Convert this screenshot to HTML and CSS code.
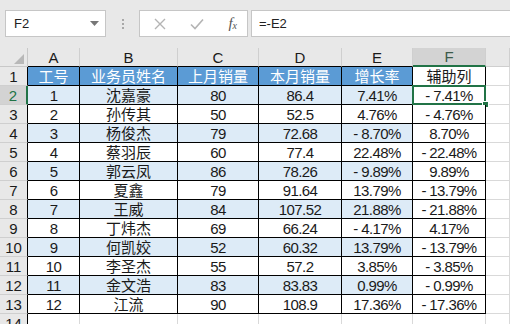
FILE: index.html
```html
<!DOCTYPE html>
<html>
    <head>
        <title>辅助列</title>
        <link rel="stylesheet" href="styles.css">
    </head>
    <body>
        <div class="formula-bar">
            <div class="name-box">
                <span>F2</span>
                <svg class="drop" width="9" height="5" viewBox="0 0 9 5"><path d="M0 0h9L4.5 5z" fill="#777"/></svg>
            </div>
            <div class="grip">
                <i></i><i></i><i></i>
            </div>
            <div class="fx-box">
                <svg width="12" height="12" viewBox="0 0 12 12"><path d="M1 1l10 10M11 1L1 11" stroke="#b4b4b4" stroke-width="1.4" fill="none"/></svg>
                <svg width="14" height="12" viewBox="0 0 14 12"><path d="M1 6.5l4 4L13 1.5" stroke="#b4b4b4" stroke-width="1.6" fill="none"/></svg>
                <span class="fx">f<sub>x</sub></span>
            </div>
            <div class="formula-input">=-E2</div>
        </div>

        <table class="sheet">
            <colgroup>
                <col style="width: 28px">
                <col style="width: 52px">
                <col style="width: 98px">
                <col style="width: 81px">
                <col style="width: 83px">
                <col style="width: 71px">
                <col style="width: 73px">
                <col style="width: 24px">
            </colgroup>
            <tr class="col-heads">
                <td class="corner"><span class="tri"></span></td>
                <td class="ch">A</td>
                <td class="ch">B</td>
                <td class="ch">C</td>
                <td class="ch">D</td>
                <td class="ch">E</td>
                <td class="ch active">F</td>
                <td class="ch blank"></td>
            </tr>
            <tr>
                <td class="rh">1</td>
                <td class="c hd zh">工号</td>
                <td class="c hd zh">业务员姓名</td>
                <td class="c hd zh">上月销量</td>
                <td class="c hd zh">本月销量</td>
                <td class="c hd zh">增长率</td>
                <td class="c zh">辅助列</td>
                <td class="g"></td>
            </tr>
            <tr class="alt">
                <td class="rh active">2</td>
                <td class="c">1</td>
                <td class="c zh">沈嘉豪</td>
                <td class="c">80</td>
                <td class="c">86.4</td>
                <td class="c">7.41%</td>
                <td class="c aux"><div class="sel"><span class="handle"></span></div>- 7.41%</td>
                <td class="g"></td>
            </tr>
            <tr>
                <td class="rh">3</td>
                <td class="c">2</td>
                <td class="c zh">孙传其</td>
                <td class="c">50</td>
                <td class="c">52.5</td>
                <td class="c">4.76%</td>
                <td class="c aux">- 4.76%</td>
                <td class="g"></td>
            </tr>
            <tr class="alt">
                <td class="rh">4</td>
                <td class="c">3</td>
                <td class="c zh">杨俊杰</td>
                <td class="c">79</td>
                <td class="c">72.68</td>
                <td class="c">- 8.70%</td>
                <td class="c aux">8.70%</td>
                <td class="g"></td>
            </tr>
            <tr>
                <td class="rh">5</td>
                <td class="c">4</td>
                <td class="c zh">蔡羽辰</td>
                <td class="c">60</td>
                <td class="c">77.4</td>
                <td class="c">22.48%</td>
                <td class="c aux">- 22.48%</td>
                <td class="g"></td>
            </tr>
            <tr class="alt">
                <td class="rh">6</td>
                <td class="c">5</td>
                <td class="c zh">郭云凤</td>
                <td class="c">86</td>
                <td class="c">78.26</td>
                <td class="c">- 9.89%</td>
                <td class="c aux">9.89%</td>
                <td class="g"></td>
            </tr>
            <tr>
                <td class="rh">7</td>
                <td class="c">6</td>
                <td class="c zh">夏鑫</td>
                <td class="c">79</td>
                <td class="c">91.64</td>
                <td class="c">13.79%</td>
                <td class="c aux">- 13.79%</td>
                <td class="g"></td>
            </tr>
            <tr class="alt">
                <td class="rh">8</td>
                <td class="c">7</td>
                <td class="c zh">王威</td>
                <td class="c">84</td>
                <td class="c">107.52</td>
                <td class="c">21.88%</td>
                <td class="c aux">- 21.88%</td>
                <td class="g"></td>
            </tr>
            <tr>
                <td class="rh">9</td>
                <td class="c">8</td>
                <td class="c zh">丁炜杰</td>
                <td class="c">69</td>
                <td class="c">66.24</td>
                <td class="c">- 4.17%</td>
                <td class="c aux">4.17%</td>
                <td class="g"></td>
            </tr>
            <tr class="alt">
                <td class="rh">10</td>
                <td class="c">9</td>
                <td class="c zh">何凯姣</td>
                <td class="c">52</td>
                <td class="c">60.32</td>
                <td class="c">13.79%</td>
                <td class="c aux">- 13.79%</td>
                <td class="g"></td>
            </tr>
            <tr>
                <td class="rh">11</td>
                <td class="c">10</td>
                <td class="c zh">李圣杰</td>
                <td class="c">55</td>
                <td class="c">57.2</td>
                <td class="c">3.85%</td>
                <td class="c aux">- 3.85%</td>
                <td class="g"></td>
            </tr>
            <tr class="alt">
                <td class="rh">12</td>
                <td class="c">11</td>
                <td class="c zh">金文浩</td>
                <td class="c">83</td>
                <td class="c">83.83</td>
                <td class="c">0.99%</td>
                <td class="c aux">- 0.99%</td>
                <td class="g"></td>
            </tr>
            <tr>
                <td class="rh">13</td>
                <td class="c">12</td>
                <td class="c zh">江流</td>
                <td class="c">90</td>
                <td class="c">108.9</td>
                <td class="c">17.36%</td>
                <td class="c aux">- 17.36%</td>
                <td class="g"></td>
            </tr>
            <tr>
                <td class="rh">14</td>
                <td class="g"></td>
                <td class="g"></td>
                <td class="g"></td>
                <td class="g"></td>
                <td class="g"></td>
                <td class="g"></td>
                <td class="g"></td>
            </tr>
        </table>
    </body>
</html>
```

FILE: styles.css
```css
body {
  margin: 0;
  padding: 0;
  background: #e8e8e8;
  font-family: "Liberation Sans", "Noto Sans CJK SC", sans-serif;
  overflow: hidden;
  width: 510px;
  height: 324px;
}

/* formula bar */

.formula-bar {
  display: flex;
  align-items: center;
  height: 27px;
  padding: 10px 0 11px 5px;
}

.name-box,
.fx-box,
.formula-input {
  height: 27px;
  box-sizing: border-box;
  background: #fff;
  border: 1px solid #c6c6c6;
  display: flex;
  align-items: center;
}

.name-box {
  width: 101px;
  padding: 0 6px 0 8px;
  justify-content: space-between;
  font-size: 13px;
  color: #222;
}

.grip {
  width: 33px;
  display: flex;
  flex-direction: column;
  align-items: center;
  gap: 2px;
}

.grip i {
  width: 2px;
  height: 2px;
  background: #a8a8a8;
}

.fx-box {
  width: 109px;
  padding: 0 10px 0 14px;
  justify-content: space-between;
}

.fx {
  font-family: "Liberation Serif", serif;
  font-style: italic;
  font-size: 15px;
  color: #555;
}

.fx sub {
  font-size: 10px;
  vertical-align: -1px;
}

.formula-input {
  flex: 1;
  margin-left: 3px;
  border-right: none;
  padding-left: 7px;
  font-size: 13px;
  color: #222;
}

/* sheet */

.sheet {
  border-collapse: separate;
  border-spacing: 0;
  table-layout: fixed;
  width: 510px;
}

.sheet td {
  padding: 0;
  box-sizing: border-box;
  text-align: center;
  white-space: pre;
  overflow: hidden;
  font-size: 15px;
  letter-spacing: -0.6px;
  line-height: 17px;
  color: #1a1a1a;
}

.sheet tr {
  height: 19px;
}

.sheet .col-heads {
  height: 18px;
}

.corner {
  position: relative;
  border-right: 1px solid #c8c8c8;
  border-bottom: 1px solid #c8c8c8;
}

.tri {
  position: absolute;
  right: 3px;
  bottom: 2px;
  width: 0;
  height: 0;
  border-left: 10px solid transparent;
  border-bottom: 10px solid #b8b8b8;
}

.ch {
  background: #e8e8e8;
  color: #444;
  border-right: 1px solid #cfcfcf;
  border-bottom: 1px solid #000;
}

.sheet .ch,
.sheet .rh {
  letter-spacing: 0;
}

.ch.active {
  background: #d3d3d3;
  color: #3c5a4a;
  border-bottom: 2px solid #217346;
}

.ch.blank {
  border-bottom: 1px solid #cfcfcf;
}

.rh {
  background: #e8e8e8;
  color: #444;
  border-right: 1px solid #000;
  border-bottom: 1px solid #cfcfcf;
}

.rh.active {
  background: #d3d3d3;
  color: #217346;
  border-right: 2px solid #217346;
}

.c {
  background: #fff;
  border-right: 1px solid #000;
  border-bottom: 1px solid #000;
}

.alt .c {
  background: #ddebf7;
}

.alt .c.aux {
  background: #fff;
}

.c.hd {
  background: #5b9bd5;
  color: #fff;
}

.sheet .zh {
  letter-spacing: 0;
}

.g {
  background: #fff;
  border-right: 1px solid #d9d9d9;
  border-bottom: 1px solid #d9d9d9;
}

.aux {
  position: relative;
  overflow: visible !important;
}

.sel {
  position: absolute;
  left: -1px;
  top: -1px;
  right: -1px;
  bottom: -1px;
  border: 2px solid #217346;
}

.handle {
  position: absolute;
  right: -5px;
  bottom: -5px;
  width: 5px;
  height: 5px;
  background: #217346;
  border: 1px solid #fff;
}
```
